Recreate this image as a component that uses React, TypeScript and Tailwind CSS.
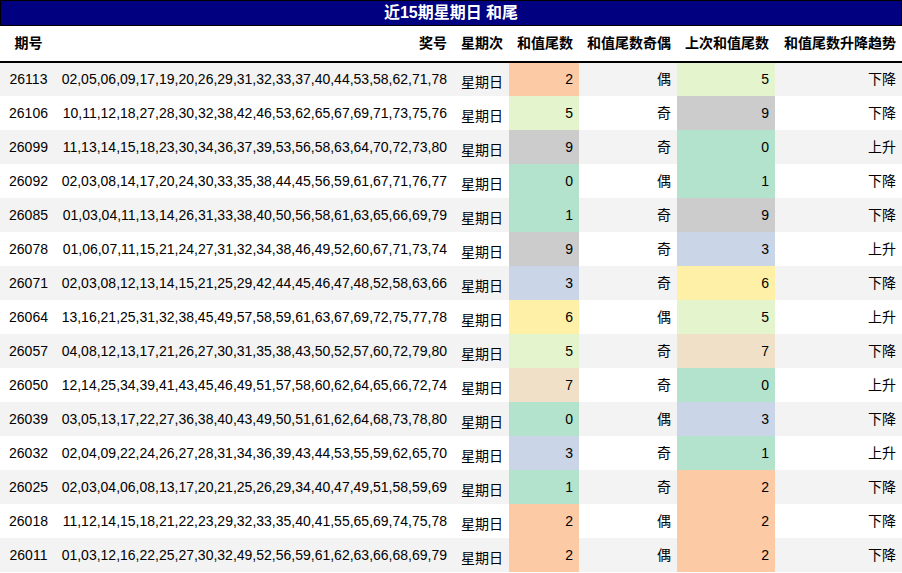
import React from 'react';

const rows: [string, string, number, string, number, string][] = [
  ['26113', '02,05,06,09,17,19,20,26,29,31,32,33,37,40,44,53,58,62,71,78', 2, '偶', 5, '下降'],
  ['26106', '10,11,12,18,27,28,30,32,38,42,46,53,62,65,67,69,71,73,75,76', 5, '奇', 9, '下降'],
  ['26099', '11,13,14,15,18,23,30,34,36,37,39,53,56,58,63,64,70,72,73,80', 9, '奇', 0, '上升'],
  ['26092', '02,03,08,14,17,20,24,30,33,35,38,44,45,56,59,61,67,71,76,77', 0, '偶', 1, '下降'],
  ['26085', '01,03,04,11,13,14,26,31,33,38,40,50,56,58,61,63,65,66,69,79', 1, '奇', 9, '下降'],
  ['26078', '01,06,07,11,15,21,24,27,31,32,34,38,46,49,52,60,67,71,73,74', 9, '奇', 3, '上升'],
  ['26071', '02,03,08,12,13,14,15,21,25,29,42,44,45,46,47,48,52,58,63,66', 3, '奇', 6, '下降'],
  ['26064', '13,16,21,25,31,32,38,45,49,57,58,59,61,63,67,69,72,75,77,78', 6, '偶', 5, '上升'],
  ['26057', '04,08,12,13,17,21,26,27,30,31,35,38,43,50,52,57,60,72,79,80', 5, '奇', 7, '下降'],
  ['26050', '12,14,25,34,39,41,43,45,46,49,51,57,58,60,62,64,65,66,72,74', 7, '奇', 0, '上升'],
  ['26039', '03,05,13,17,22,27,36,38,40,43,49,50,51,61,62,64,68,73,78,80', 0, '偶', 3, '下降'],
  ['26032', '02,04,09,22,24,26,27,28,31,34,36,39,43,44,53,55,59,62,65,70', 3, '奇', 1, '上升'],
  ['26025', '02,03,04,06,08,13,17,20,21,25,26,29,34,40,47,49,51,58,59,69', 1, '奇', 2, '下降'],
  ['26018', '11,12,14,15,18,21,22,23,29,32,33,35,40,41,55,65,69,74,75,78', 2, '偶', 2, '下降'],
  ['26011', '01,03,12,16,22,25,27,30,32,49,52,56,59,61,62,63,66,68,69,79', 2, '偶', 2, '下降'],
];

const tone: Record<number, string> = {
  0: 'bg-[#b3e3cc]',
  1: 'bg-[#b3e3cc]',
  2: 'bg-[#fdcaa6]',
  3: 'bg-[#cad5e7]',
  5: 'bg-[#e4f4cc]',
  6: 'bg-[#fff0a8]',
  7: 'bg-[#f0e0c8]',
  9: 'bg-[#cccccc]',
};

export default function App() {
  return (
    <div className="w-[902px] text-[14px] text-black font-[Liberation_Sans,Noto_Sans_CJK_SC,sans-serif]">
      <div className="h-[26px] bg-[#000080] border border-black text-white font-bold text-[16px] flex items-center justify-center">
        近15期星期日 和尾
      </div>
      <table className="w-full border-collapse table-fixed">
        <colgroup>
          <col className="w-[53px]" />
          <col className="w-[400px]" />
          <col className="w-[56px]" />
          <col className="w-[70px]" />
          <col className="w-[98px]" />
          <col className="w-[98px]" />
          <col className="w-[127px]" />
        </colgroup>
        <thead>
          <tr className="h-[36px] border-b-2 border-black font-bold">
            <th className="text-center pl-1">期号</th>
            <th className="text-right pr-1.5">奖号</th>
            <th className="text-right pr-1.5">星期次</th>
            <th className="text-right pr-1.5">和值尾数</th>
            <th className="text-right pr-1.5">和值尾数奇偶</th>
            <th className="text-right pr-1.5">上次和值尾数</th>
            <th className="text-right pr-1.5">和值尾数升降趋势</th>
          </tr>
        </thead>
        <tbody>
          {rows.map((r, i) => (
            <tr key={r[0]} className={`h-[34px] ${i % 2 === 0 ? 'bg-[#f3f3f3]' : 'bg-white'}`}>
              <td className="text-center pl-1">{r[0]}</td>
              <td className="text-right pr-1.5 whitespace-nowrap">{r[1]}</td>
              <td className="text-right pr-1.5 pt-1.5">星期日</td>
              <td className={`text-right pr-1.5 ${tone[r[2]]}`}>{r[2]}</td>
              <td className="text-right pr-1.5">{r[3]}</td>
              <td className={`text-right pr-1.5 ${tone[r[4]]}`}>{r[4]}</td>
              <td className="text-right pr-1.5">{r[5]}</td>
            </tr>
          ))}
        </tbody>
      </table>
    </div>
  );
}
